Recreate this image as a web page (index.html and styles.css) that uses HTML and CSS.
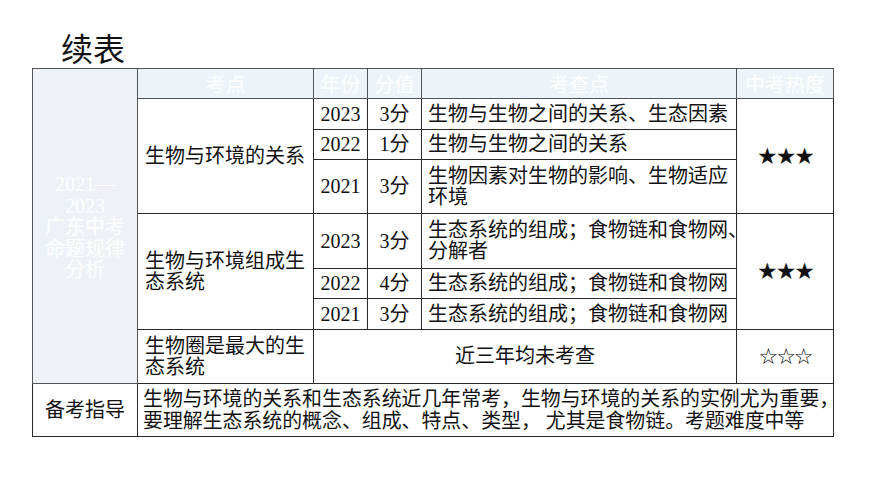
FILE: index.html
```html
<!DOCTYPE html>
<html lang="zh">
<head>
<meta charset="utf-8">
<link rel="stylesheet" href="styles.css">
</head>
<body>
<div class="page">
  <h1 class="title">续表</h1>
  <table class="grid">
    <colgroup>
      <col class="c-side"><col class="c-topic"><col class="c-year"><col class="c-score"><col class="c-point"><col class="c-heat">
    </colgroup>
    <tr class="r-head">
      <td class="side" rowspan="8">2021—<br>2023<br>广东中考<br>命题规律<br>分析</td>
      <td class="head">考点</td>
      <td class="head">年份</td>
      <td class="head">分值</td>
      <td class="head">考查点</td>
      <td class="head">中考热度</td>
    </tr>
    <tr class="r-31">
      <td class="topic" rowspan="3">生物与环境的关系</td>
      <td class="num">2023</td>
      <td class="num">3分</td>
      <td class="point">生物与生物之间的关系、生态因素</td>
      <td class="heat" rowspan="3">★★★</td>
    </tr>
    <tr class="r-30">
      <td class="num">2022</td>
      <td class="num">1分</td>
      <td class="point">生物与生物之间的关系</td>
    </tr>
    <tr class="r-54">
      <td class="num">2021</td>
      <td class="num">3分</td>
      <td class="point">生物因素对生物的影响、生物适应环境</td>
    </tr>
    <tr class="r-55">
      <td class="topic" rowspan="3">生物与环境组成生态系统</td>
      <td class="num">2023</td>
      <td class="num">3分</td>
      <td class="point tight">生态系统的组成；食物链和食物网、<br>分解者</td>
      <td class="heat" rowspan="3">★★★</td>
    </tr>
    <tr class="r-30">
      <td class="num">2022</td>
      <td class="num">4分</td>
      <td class="point">生态系统的组成；食物链和食物网</td>
    </tr>
    <tr class="r-31">
      <td class="num">2021</td>
      <td class="num">3分</td>
      <td class="point">生态系统的组成；食物链和食物网</td>
    </tr>
    <tr class="r-54">
      <td class="topic">生物圈是最大的生态系统</td>
      <td class="none" colspan="3">近三年均未考查</td>
      <td class="heat hollow">☆☆☆</td>
    </tr>
    <tr class="r-53">
      <td class="guide-label">备考指导</td>
      <td class="guide" colspan="5">生物与环境的关系和生态系统近几年常考，生物与环境的关系的实例尤为重要，<br>要理解生态系统的概念、组成、特点、类型，&nbsp;尤其是食物链。考题难度中等</td>
    </tr>
  </table>
</div>
</body>
</html>
```

FILE: styles.css
```css
html, body {
  margin: 0;
  padding: 0;
  background: #ffffff;
}

body {
  font-family: "Liberation Serif", "Noto Sans CJK SC", serif;
  color: #111111;
}

.page {
  width: 870px;
  height: 489px;
  padding: 27px 0 0 32px;
  box-sizing: border-box;
}

.title {
  margin: 0 0 0 29px;
  font-family: "Noto Sans CJK SC", sans-serif;
  font-weight: normal;
  font-size: 32px;
  line-height: 41px;
  height: 41px;
  color: #111111;
}

.grid {
  border-collapse: collapse;
  table-layout: fixed;
  width: 801px;
  border: 1.5px solid #555555;
}

.c-side { width: 105px; }
.c-topic { width: 176px; }
.c-year { width: 54px; }
.c-score { width: 54px; }
.c-point { width: 315px; }
.c-heat { width: 97px; }

.grid td {
  border: 1px solid #2a2a2a;
  padding: 0;
  font-size: 20px;
  line-height: 21px;
  vertical-align: middle;
}

.r-head td { height: 29px; }
.r-30 td { height: 29px; }
.r-31 td { height: 30px; }
.r-54 td { height: 53px; }
.r-55 td { height: 54px; }
.r-53 td { height: 52px; }

.grid td.head {
  background: #eef3f9;
  color: #ffffff;
  text-align: center;
  border-color: #555555;
  font-family: "Noto Sans CJK SC", sans-serif;
}

.grid td.side {
  background: #eef2f8;
  color: #ffffff;
  text-align: center;
  font-size: 20px;
  line-height: 21.5px;
  padding-top: 4px;
  border-color: #555555;
  font-family: "Liberation Serif", "Noto Sans CJK SC", serif;
}

.grid td.topic {
  padding: 0 4px 0 7px;
}

.grid td.num {
  text-align: center;
  font-size: 20px;
}

.grid td.point {
  padding: 0 2px 0 6px;
}

.grid td.point.tight {
  white-space: nowrap;
}

.grid td.heat {
  text-align: center;
  font-family: "DejaVu Sans", sans-serif;
  font-size: 23px;
  letter-spacing: -2px;
}

.grid td.heat.hollow {
  font-size: 22px;
  color: #000000;
}

.grid td.none {
  text-align: center;
}

.grid td.guide-label {
  text-align: center;
}

.grid td.guide {
  padding: 0 0 0 5px;
  font-size: 19.9px;
  white-space: nowrap;
  line-height: 22px;
}
```
